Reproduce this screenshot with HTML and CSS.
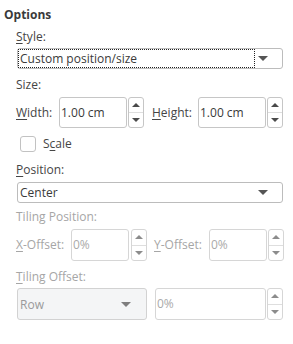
FILE: index.html
```html
<!DOCTYPE html>
<html lang="en">
<head>
    <meta charset="UTF-8">
    <meta name="viewport" content="width=device-width, initial-scale=1.0">
    <title>Options</title>
    <link rel="stylesheet" href="styles.css">
</head>
<body>
    <div class="panel">
        <div class="title">Options</div>
        <div class="group">
            <div class="label gap-title"><u>S</u>tyle:</div>
            <div class="select select-style">
                <span class="select-text focus">Custom position/size</span>
                <span class="arrow"></span>
            </div>

            <div class="label gap-size">Size:</div>
            <div class="row row-size">
                <span class="field-label w-width"><u>W</u>idth:</span>
                <div class="input w-68">1.00 cm</div>
                <div class="spin"><span class="up"></span><span class="down"></span></div>
                <span class="field-label w-height"><u>H</u>eight:</span>
                <div class="input w-68">1.00 cm</div>
                <div class="spin"><span class="up"></span><span class="down"></span></div>
            </div>

            <div class="check">
                <span class="box"></span>
                <span>S<u>c</u>ale</span>
            </div>

            <div class="label gap-pos"><u>P</u>osition:</div>
            <div class="select select-pos">
                <span class="select-text">Center</span>
                <span class="arrow"></span>
            </div>

            <div class="label disabled gap-tile">Tiling Position:</div>
            <div class="row row-offset disabled">
                <span class="field-label w-xoff"><u>X</u>-Offset:</span>
                <div class="input w-58">0%</div>
                <div class="spin spin-x"><span class="up"></span><span class="down"></span></div>
                <span class="field-label w-yoff"><u>Y</u>-Offset:</span>
                <div class="input w-58">0%</div>
                <div class="spin"><span class="up"></span><span class="down"></span></div>
            </div>

            <div class="label disabled gap-toff"><u>T</u>iling Offset:</div>
            <div class="row row-tile disabled">
                <div class="select select-row">
                    <span class="select-text">Row</span>
                    <span class="arrow"></span>
                </div>
                <div class="input w-111">0%</div>
                <div class="spin"><span class="up"></span><span class="down"></span></div>
            </div>
        </div>
    </div>
</body>
</html>
```

FILE: styles.css
```css
body {
    margin: 0;
    background-color: #ffffff;
    font-family: "Open Sans", "DejaVu Sans", sans-serif;
    font-size: 12px;
    line-height: 16px;
    color: #454545;
}
u {
    text-decoration-thickness: 1px;
    text-underline-offset: 2px;
}
.panel {
    padding: 7px 0 0 4px;
}
.title {
    font-weight: bold;
    color: #3a3a3a;
}
.group {
    display: flex;
    flex-direction: column;
    align-items: flex-start;
    padding-left: 12px;
}
.label {
    height: 16px;
}
.disabled {
    color: #a6a6a6;
}
.gap-title { margin-top: 6px; }
.gap-size { margin-top: 8px; }
.gap-pos { margin-top: 10px; }
.gap-tile { margin-top: 6px; }
.gap-toff { margin-top: 8px; }

.select {
    box-sizing: border-box;
    display: flex;
    align-items: center;
    height: 21px;
    margin-left: 1px;
    border: 1px solid #bcbcbc;
    border-radius: 3px;
    background-color: #ffffff;
    color: #3a3a3a;
}
.select-style, .select-pos {
    width: 266px;
    margin-top: 3px;
}
.select-pos {
    margin-top: 4px;
}
.select-text {
    flex: 1;
    box-sizing: border-box;
    height: 19px;
    line-height: 17px;
    padding-left: 1px;
    border: 1px solid transparent;
}
.focus {
    border: 1px dotted #222222;
    flex: 0 0 237px;
}
.select-style .focus + .arrow {
    margin-left: auto;
}
.arrow {
    width: 0;
    height: 0;
    margin-right: 14px;
    border-left: 5px solid transparent;
    border-right: 5px solid transparent;
    border-top: 5px solid #555555;
}

.row {
    display: flex;
    align-items: center;
}
.row-size {
    margin-top: 4px;
    height: 31px;
}
.row-offset {
    margin-top: 4px;
    height: 32px;
}
.row-tile {
    margin-top: 3px;
    height: 32px;
    margin-left: 1px;
}
.field-label {
    display: block;
}
.w-width { width: 43px; }
.w-height { width: 46px; margin-left: 8px; }
.w-xoff { width: 55px; }
.w-yoff { width: 55px; margin-left: 7px; }

.input {
    box-sizing: border-box;
    height: 100%;
    display: flex;
    align-items: center;
    padding-left: 1px;
    border: 1px solid #c6c6c6;
    border-radius: 3px;
    background-color: #ffffff;
    color: #3a3a3a;
}
.disabled .input {
    border-color: #d6d6d6;
    color: #aaaaaa;
}
.w-68 { width: 68px; }
.w-58 { width: 58px; }
.w-111 { width: 111px; margin-left: 8px; }

.spin {
    box-sizing: border-box;
    width: 16px;
    height: 100%;
    margin-left: 1px;
    display: flex;
    flex-direction: column;
    border: 1px solid #c6c6c6;
    border-radius: 3px;
    background-color: #ffffff;
}
.spin-x {
    margin-left: 2px;
}
.disabled .spin {
    border-color: #d6d6d6;
}
.spin span {
    flex: 1;
    display: flex;
    align-items: center;
    justify-content: center;
}
.spin .up {
    border-bottom: 1px solid #dedede;
}
.spin .up::before {
    content: "";
    border-left: 4px solid transparent;
    border-right: 4px solid transparent;
    border-bottom: 4px solid #4a4a4a;
}
.spin .down::before {
    content: "";
    border-left: 4px solid transparent;
    border-right: 4px solid transparent;
    border-top: 4px solid #4a4a4a;
}
.disabled .spin .up::before {
    border-bottom-color: #8c8c8c;
}
.disabled .spin .down::before {
    border-top-color: #8c8c8c;
}

.check {
    display: flex;
    align-items: center;
    gap: 7px;
    height: 16px;
    margin-top: 8px;
    padding-left: 4px;
}
.check .box {
    box-sizing: border-box;
    width: 16px;
    height: 16px;
    border: 1px solid #c2c2c2;
    border-radius: 3px;
    background-color: #ffffff;
}

.select-row {
    width: 130px;
    height: 100%;
    margin-left: 0;
    border-color: #d2d2d2;
    background-color: #f4f5f6;
    color: #9a9a9a;
}
.select-row .select-text {
    line-height: 17px;
}
.select-row .arrow {
    margin-right: 15px;
    border-top-color: #7e7e7e;
}
```
